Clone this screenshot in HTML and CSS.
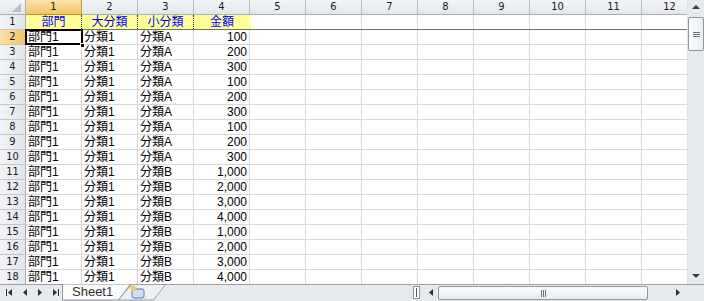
FILE: index.html
```html
<!DOCTYPE html>
<html lang="ja">
<head>
<meta charset="utf-8">
<link rel="stylesheet" href="styles.css">
</head>
<body>
<div class="app">
  <div class="main">
    <div class="sheet">
      <div class="hrow">
        <div class="corner"><svg width="26" height="15"><polygon points="21,3 21,12 12,12" fill="#b9bec6"/></svg></div>
        <div class="ch sel">1</div><div class="ch">2</div><div class="ch">3</div><div class="ch">4</div>
        <div class="ch">5</div><div class="ch">6</div><div class="ch">7</div><div class="ch">8</div>
        <div class="ch">9</div><div class="ch">10</div><div class="ch">11</div><div class="ch">12</div>
      </div>
      <div class="row frozen"><div class="rh">1</div><div class="c t">部門</div><div class="c t">大分類</div><div class="c t">小分類</div><div class="c t last">金額</div></div>
      <div class="row"><div class="rh sel">2</div><div class="c active">部門1<span class="handle"></span></div><div class="c">分類1</div><div class="c">分類A</div><div class="c n">100</div></div>
      <div class="row"><div class="rh">3</div><div class="c">部門1</div><div class="c">分類1</div><div class="c">分類A</div><div class="c n">200</div></div>
      <div class="row"><div class="rh">4</div><div class="c">部門1</div><div class="c">分類1</div><div class="c">分類A</div><div class="c n">300</div></div>
      <div class="row"><div class="rh">5</div><div class="c">部門1</div><div class="c">分類1</div><div class="c">分類A</div><div class="c n">100</div></div>
      <div class="row"><div class="rh">6</div><div class="c">部門1</div><div class="c">分類1</div><div class="c">分類A</div><div class="c n">200</div></div>
      <div class="row"><div class="rh">7</div><div class="c">部門1</div><div class="c">分類1</div><div class="c">分類A</div><div class="c n">300</div></div>
      <div class="row"><div class="rh">8</div><div class="c">部門1</div><div class="c">分類1</div><div class="c">分類A</div><div class="c n">100</div></div>
      <div class="row"><div class="rh">9</div><div class="c">部門1</div><div class="c">分類1</div><div class="c">分類A</div><div class="c n">200</div></div>
      <div class="row"><div class="rh">10</div><div class="c">部門1</div><div class="c">分類1</div><div class="c">分類A</div><div class="c n">300</div></div>
      <div class="row"><div class="rh">11</div><div class="c">部門1</div><div class="c">分類1</div><div class="c">分類B</div><div class="c n">1,000</div></div>
      <div class="row"><div class="rh">12</div><div class="c">部門1</div><div class="c">分類1</div><div class="c">分類B</div><div class="c n">2,000</div></div>
      <div class="row"><div class="rh">13</div><div class="c">部門1</div><div class="c">分類1</div><div class="c">分類B</div><div class="c n">3,000</div></div>
      <div class="row"><div class="rh">14</div><div class="c">部門1</div><div class="c">分類1</div><div class="c">分類B</div><div class="c n">4,000</div></div>
      <div class="row"><div class="rh">15</div><div class="c">部門1</div><div class="c">分類1</div><div class="c">分類B</div><div class="c n">1,000</div></div>
      <div class="row"><div class="rh">16</div><div class="c">部門1</div><div class="c">分類1</div><div class="c">分類B</div><div class="c n">2,000</div></div>
      <div class="row"><div class="rh">17</div><div class="c">部門1</div><div class="c">分類1</div><div class="c">分類B</div><div class="c n">3,000</div></div>
      <div class="row"><div class="rh">18</div><div class="c">部門1</div><div class="c">分類1</div><div class="c">分類B</div><div class="c n">4,000</div></div>
    </div>
    <div class="vscroll">
      <div class="varrow"><svg width="17" height="15"><polygon points="4,9 12,9 8,5" fill="#3a3d42"/></svg></div>
      <div class="vthumb"><svg width="9" height="7"><path d="M1 1.5H8M1 3.5H8M1 5.5H8" stroke="#6b7079" stroke-width="1"/></svg></div>
      <div class="vtrack"></div>
      <div class="varrow"><svg width="17" height="15"><polygon points="4,6 12,6 8,10" fill="#3a3d42"/></svg></div>
    </div>
  </div>
  <div class="bottom">
    <div class="nav">
      <svg width="62" height="17">
        <rect x="6" y="5" width="1" height="7" fill="#2c2f33"/><polygon points="12,5 12,12 8,8.5" fill="#2c2f33"/>
        <polygon points="27,5 27,12 23,8.5" fill="#2c2f33"/>
        <polygon points="38,5 38,12 42,8.5" fill="#2c2f33"/>
        <polygon points="53,5 53,12 57,8.5" fill="#2c2f33"/><rect x="58" y="5" width="1" height="7" fill="#2c2f33"/>
      </svg>
    </div>
    <div class="tabs">
      <svg class="tabshape" width="110" height="17">
        <polygon points="69.5,0.5 103.5,0.5 91.5,16 56,16" fill="#eef0f3" stroke="#9aa0a8" stroke-width="1"/>
        <polygon points="0.5,0 68.5,0 56.5,16 0.5,16" fill="#fbfbfc" stroke="#8c929b" stroke-width="1"/>
        <rect x="70" y="5" width="12" height="9" rx="2" fill="#cfe0f5" stroke="#5b7fae" stroke-width="1"/>
        <circle cx="71" cy="4" r="2.6" fill="#f5c542"/>
        <path d="M71 0.5V7.5M67.5 4H74.5" stroke="#f7d96a" stroke-width="0.8"/>
      </svg>
      <span class="tabname">Sheet1</span>
    </div>
    <div class="gap"></div>
    <div class="split"><span></span></div>
    <div class="harrow"><svg width="14" height="17"><polygon points="9,5 9,12 5,8.5" fill="#2c2f33"/></svg></div>
    <div class="hthumb"><svg width="7" height="9"><path d="M1.5 1V8M3.5 1V8M5.5 1V8" stroke="#6b7079" stroke-width="1"/></svg></div>
    <div class="htrack"></div>
    <div class="harrow r"><svg width="17" height="17"><polygon points="6,5 6,12 10,8.5" fill="#2c2f33"/></svg></div>
    <div class="cornerbox"></div>
  </div>
</div>
</body>
</html>
```
FILE: styles.css
```css
* { box-sizing: border-box; }
html, body { margin: 0; padding: 0; }
body {
  width: 704px;
  height: 301px;
  overflow: hidden;
  background: #ffffff;
  font-family: "Liberation Sans", "Noto Sans CJK JP", sans-serif;
  font-size: 12px;
  color: #000;
}
.app { display: flex; flex-direction: column; width: 704px; height: 301px; }
.main { display: flex; height: 284px; }
.sheet {
  width: 687px;
  height: 284px;
  overflow: hidden;
  display: flex;
  flex-direction: column;
}
.hrow { display: flex; height: 15px; flex: none; }
.corner {
  width: 26px; height: 15px; flex: none;
  background: linear-gradient(#f2f4f7, #e3e7ec);
  border-right: 1px solid #a9aeb5;
  border-bottom: 1px solid #a9aeb5;
}
.corner svg { display: block; }
.ch {
  width: 56px; height: 15px; flex: none;
  background: linear-gradient(#f4f6f9, #e2e6eb);
  border-right: 1px solid #b8bcc2;
  border-bottom: 1px solid #a9aeb5;
  text-align: center;
  line-height: 14px;
  font-family: "DejaVu Sans Condensed", "DejaVu Sans", sans-serif;
  font-size: 11px;
  color: #1a1a1a;
}
.ch.sel { background: linear-gradient(#fbe3ad, #f2c366); border-right-color: #c49a49; border-bottom-color: #c08f2e; }
.row {
  display: flex;
  height: 15px;
  flex: none;
  border-bottom: 1px solid #d9d9d9;
  background-image: repeating-linear-gradient(to right, transparent 0 55px, #d9d9d9 55px 56px);
  background-position: 26px 0;
  background-repeat: repeat-y;
}
.row.frozen { border-bottom: 1px solid #6e6e6e; }
.rh {
  width: 26px; height: 15px; flex: none;
  margin-bottom: -1px;
  background: linear-gradient(to right, #f2f4f7, #e2e6eb);
  border-right: 1px solid #a9aeb5;
  border-bottom: 1px solid #c3c7cd;
  text-align: center;
  line-height: 14px;
  font-family: "DejaVu Sans Condensed", "DejaVu Sans", sans-serif;
  font-size: 11px;
  color: #1a1a1a;
}
.rh.sel { background: linear-gradient(to right, #fbe3ad, #f2c366); border-right-color: #c08f2e; }
.c {
  width: 56px; height: 14px; flex: none;
  border-right: 1px solid #d9d9d9;
  padding: 0 2px;
  line-height: 14px;
  white-space: nowrap;
  overflow: hidden;
}
.c.n { text-align: right; padding-right: 2px; }
.c.t {
  background: #ffff99;
  color: #0000ff;
  text-align: center;
  border-right: 1px dotted #222;
}
.c.t.last { border-right: 1px solid #ffff99; width: 57px; }
.c.active { outline: 2px solid #000; outline-offset: -1px; z-index: 2; position: relative; overflow: visible; }
.handle {
  position: absolute;
  right: -4px; bottom: -4px;
  width: 5px; height: 5px;
  background: #000;
  border: 1px solid #fff;
}
.vscroll {
  width: 17px; height: 284px;
  display: flex; flex-direction: column;
  background: #e6e9ed;
  background-image: radial-gradient(#d5d9df 0.6px, transparent 0.7px);
  background-size: 2px 2px;
  border-left: 1px solid #e0e3e7;
}
.varrow { height: 16px; flex: none; }
.varrow svg { display: block; }
.vthumb {
  height: 34px; flex: none;
  margin: 1px 0 0 0;
  border: 1px solid #8f959d;
  border-radius: 2px;
  background: linear-gradient(to right, #fbfbfc, #e9ecf0);
  display: flex; align-items: center; justify-content: center;
}
.vthumb svg { display: block; }
.vtrack { flex: 1; }
.bottom {
  height: 17px;
  display: flex;
  background: #e6e9ed;
  background-image: radial-gradient(#d5d9df 0.6px, transparent 0.7px);
  background-size: 2px 2px;
  border-top: 1px solid #9ba1a9;
}
.nav { width: 62px; flex: none; }
.nav svg { display: block; margin-top: -1px; }
.tabs { width: 110px; flex: none; position: relative; margin-top: -1px; }
.tabs .tabshape { display: block; }
.tabname {
  position: absolute;
  left: 10px; top: 0;
  font-family: "Liberation Sans", sans-serif;
  font-size: 13px;
  line-height: 16px;
  color: #333;
}
.gap { flex: 1; }
.split {
  width: 7px; flex: none;
  margin: 1px 4px 2px 0;
  background: #fff;
  border: 1px solid #8f959d;
  display: flex; align-items: center; justify-content: center;
}
.split span { width: 1px; height: 9px; background: #555; }
.harrow { width: 14px; flex: none; }
.harrow.r { width: 17px; }
.harrow svg { display: block; margin-top: -1px; }
.hthumb {
  width: 210px; flex: none;
  margin: 1px 0 1px 0;
  border: 1px solid #8f959d;
  border-radius: 2px;
  background: linear-gradient(#fbfbfc, #e9ecf0);
  display: flex; align-items: center; justify-content: center;
}
.hthumb svg { display: block; }
.htrack { width: 22px; flex: none; }
.cornerbox { width: 17px; flex: none; background: #e6e9ed; }
```
